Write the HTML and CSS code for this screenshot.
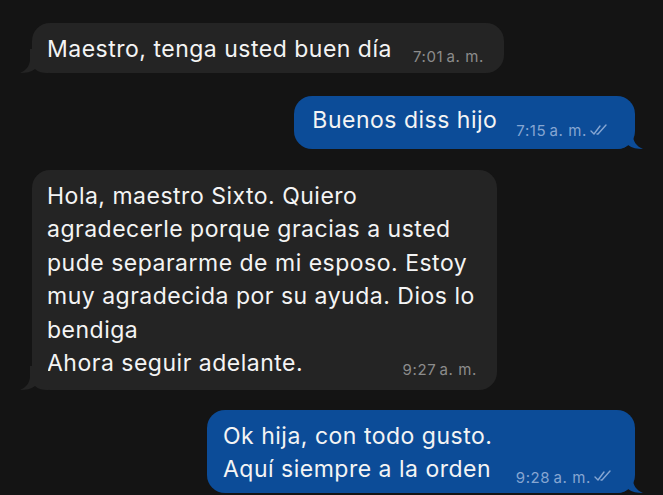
FILE: index.html
```html
<!DOCTYPE html>
<html lang="es">
<head>
<meta charset="utf-8">
<link rel="stylesheet" href="styles.css">
</head>
<body>
<div class="chat">
  <div class="row in">
    <div class="bubble gray b1">
      <span class="text">Maestro, tenga usted buen día</span>
      <span class="meta">7:01&#8239;a. m.</span>
      <svg class="tail tail-left" viewBox="0 0 30 24" width="30" height="24"><path d="M30 0 H12 V10 C12 16 9 21 2 24 C8 24 13 23 17 20 C20 23 25 24 30 24 Z"/></svg>
    </div>
  </div>
  <div class="row out">
    <div class="bubble blue b2">
      <span class="text">Buenos diss hijo</span>
      <span class="meta">7:15&#8239;a. m.<svg class="ticks" viewBox="0 0 18 12" width="18" height="12"><path d="M1 7 L4 10 L10 2 M7 10 L8 10 L16 1"/></svg></span>
      <svg class="tail tail-right" viewBox="0 0 30 24" width="30" height="24"><path d="M0 0 H18 V10 C18 16 21 21 28 24 C22 24 17 23 13 20 C10 23 5 24 0 24 Z"/></svg>
    </div>
  </div>
  <div class="row in">
    <div class="bubble gray b3">
      <div class="lines">
        <div>Hola, maestro Sixto. Quiero</div>
        <div>agradecerle porque gracias a usted</div>
        <div>pude separarme de mi esposo. Estoy</div>
        <div>muy agradecida por su ayuda. Dios lo</div>
        <div>bendiga</div>
        <div class="last"><span>Ahora seguir adelante.</span><span class="meta">9:27&#8239;a. m.</span></div>
      </div>
      <svg class="tail tail-left" viewBox="0 0 30 24" width="30" height="24"><path d="M30 0 H12 V10 C12 16 9 21 2 24 C8 24 13 23 17 20 C20 23 25 24 30 24 Z"/></svg>
    </div>
  </div>
  <div class="row out">
    <div class="bubble blue b4">
      <div class="lines">
        <div>Ok hija, con todo gusto.</div>
        <div class="last"><span>Aquí siempre a la orden</span><span class="meta">9:28&#8239;a. m.<svg class="ticks" viewBox="0 0 18 12" width="18" height="12"><path d="M1 7 L4 10 L10 2 M7 10 L8 10 L16 1"/></svg></span></div>
      </div>
      <svg class="tail tail-right" viewBox="0 0 30 24" width="30" height="24"><path d="M0 0 H18 V10 C18 16 21 21 28 24 C22 24 17 23 13 20 C10 23 5 24 0 24 Z"/></svg>
    </div>
  </div>
</div>
</body>
</html>
```

FILE: styles.css
```css
html, body {
  margin: 0;
  padding: 0;
  background: #141414;
  height: 100%;
  overflow: hidden;
}
.chat {
  display: flex;
  flex-direction: column;
  padding-top: 23px;
  font-family: "Inter", "Noto Sans", sans-serif;
  font-size: 23px;
  letter-spacing: 0.5px;
  color: #f4f4f4;
}
.row {
  display: flex;
}
.row.in {
  justify-content: flex-start;
  padding-left: 32px;
}
.row.out {
  justify-content: flex-end;
  padding-right: 28px;
}
.bubble {
  position: relative;
  border-radius: 18px;
  line-height: 34px;
}
.gray {
  background: #242424;
}
.blue {
  background: #0c4c98;
}
.gray .tail path { fill: #242424; }
.blue .tail path { fill: #0c4c98; }
.tail {
  position: absolute;
  bottom: 0;
}
.tail-left { left: -14px; }
.tail-right { right: -10px; }
.meta {
  font-size: 15px;
  letter-spacing: 0.6px;
  line-height: 16px;
  white-space: nowrap;
  display: inline-flex;
  align-items: center;
  gap: 3px;
}
.gray .meta { color: #8c8c8c; }
.blue .meta { color: #86a6d2; }
.ticks {
  margin-top: -3px;
}
.ticks path {
  fill: none;
  stroke: #86a6d2;
  stroke-width: 1.4;
  stroke-linecap: round;
  stroke-linejoin: round;
}
.b1 {
  padding: 9px 20px 7px 15px;
  margin-bottom: 23px;
}
.b1 .meta {
  margin-left: 14px;
  vertical-align: -5px;
}
.b2 {
  padding: 7px 27px 10px 18px;
  margin-bottom: 21px;
}
.b2 .meta {
  margin-left: 12px;
  vertical-align: -8px;
}
.b3 {
  width: 430px;
  padding: 10px 20px 10px 15px;
  line-height: 33.4px;
  margin-bottom: 20px;
}
.b3 .meta {
  position: relative;
  top: 4px;
}
.lines .last {
  display: flex;
  justify-content: space-between;
  align-items: baseline;
}
.b4 {
  width: 389px;
  padding: 10px 23px 8px 16px;
  line-height: 32.5px;
}
.b4 .meta {
  position: relative;
  top: 6px;
}
```
